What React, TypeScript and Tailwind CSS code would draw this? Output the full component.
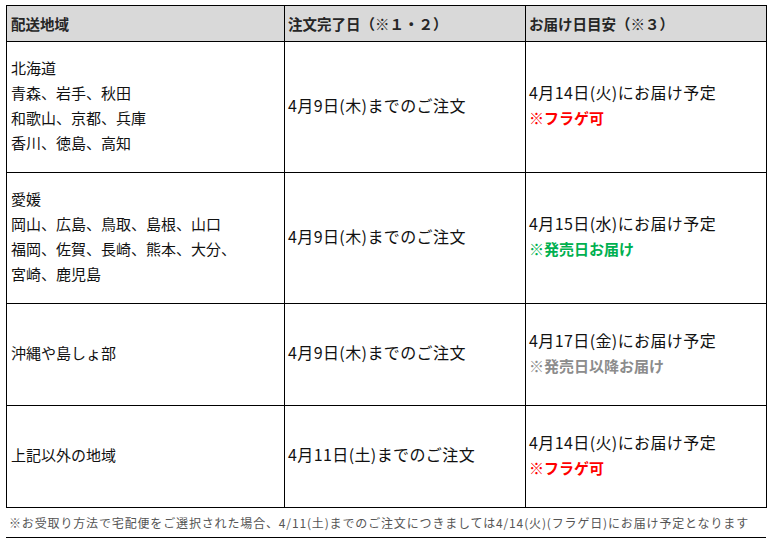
const font = { fontFamily: '"Noto Sans CJK JP", "Noto Sans", sans-serif' };

type Row = {
  regions: string[];
  deadline: string;
  delivery: string;
  note: string;
  noteClass: string;
  height: string;
};

const rows: Row[] = [
  {
    regions: ["北海道", "青森、岩手、秋田", "和歌山、京都、兵庫", "香川、徳島、高知"],
    deadline: "4月9日(木)までのご注文",
    delivery: "4月14日(火)にお届け予定",
    note: "※フラゲ可",
    noteClass: "text-[#ff0000]",
    height: "h-[131px]",
  },
  {
    regions: ["愛媛", "岡山、広島、鳥取、島根、山口", "福岡、佐賀、長崎、熊本、大分、", "宮崎、鹿児島"],
    deadline: "4月9日(木)までのご注文",
    delivery: "4月15日(水)にお届け予定",
    note: "※発売日お届け",
    noteClass: "text-[#00b050]",
    height: "h-[131px]",
  },
  {
    regions: ["沖縄や島しょ部"],
    deadline: "4月9日(木)までのご注文",
    delivery: "4月17日(金)にお届け予定",
    note: "※発売日以降お届け",
    noteClass: "text-[#8c8c8c]",
    height: "h-[102px]",
  },
  {
    regions: ["上記以外の地域"],
    deadline: "4月11日(土)までのご注文",
    delivery: "4月14日(火)にお届け予定",
    note: "※フラゲ可",
    noteClass: "text-[#ff0000]",
    height: "h-[102px]",
  },
];

export default function App() {
  return (
    <div className="bg-white w-[772px] h-[539px] pl-[6px] pt-[5px] text-[#111]" style={font}>
      <table className="table-fixed border-collapse w-[760px]">
        <colgroup>
          <col className="w-[278px]" />
          <col className="w-[241px]" />
          <col className="w-[241px]" />
        </colgroup>
        <thead>
          <tr className="h-[36px] bg-[#d9d9d9] text-[14.5px] font-bold text-[#262626]">
            <th className="border border-black text-left px-[4px] font-bold">配送地域</th>
            <th className="border border-black text-left px-[3px] font-bold">注文完了日（※１・２）</th>
            <th className="border border-black text-left px-[3px] font-bold">お届け日目安（※３）</th>
          </tr>
        </thead>
        <tbody>
          {rows.map((r, i) => (
            <tr key={i} className={r.height}>
              <td className="border border-black pl-[4px] pr-[4px] pb-[4px] align-middle text-[15px] leading-[25px]">
                {r.regions.map((line) => (
                  <div key={line}>{line}</div>
                ))}
              </td>
              <td className="border border-black px-[3px] pb-[4px] align-middle text-[16px] leading-[25px] tracking-[0.4px]">
                {r.deadline}
              </td>
              <td className="border border-black px-[3px] pb-[4px] align-middle leading-[25px]">
                <div className="text-[16px] tracking-[0.4px]">{r.delivery}</div>
                <div className={`text-[15px] font-bold ${r.noteClass}`}>{r.note}</div>
              </td>
            </tr>
          ))}
        </tbody>
      </table>
      <div className="w-[760px] h-[30px] border-b border-black pl-[3px] pt-[7px] text-[12px] leading-[16px] tracking-[0.85px] text-[#555]">
        ※お受取り方法で宅配便をご選択された場合、4/11(土)までのご注文につきましては4/14(火)(フラゲ日)にお届け予定となります
      </div>
    </div>
  );
}
